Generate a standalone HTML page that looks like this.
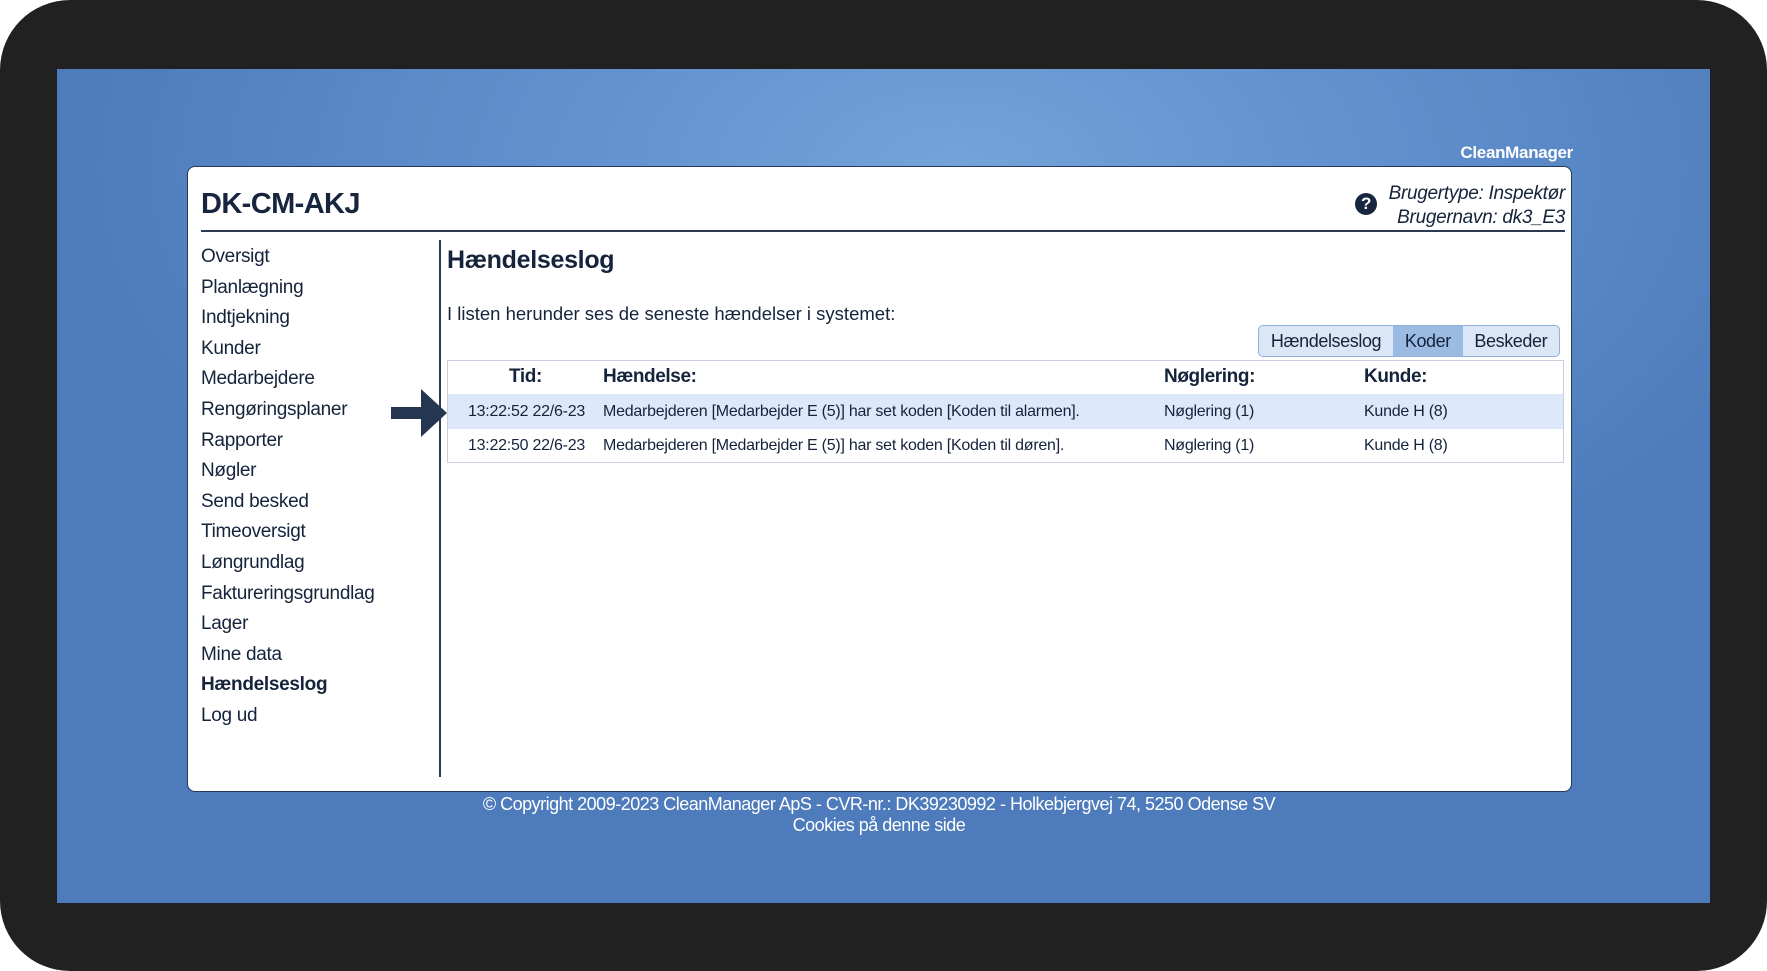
<!DOCTYPE html>
<html><head><meta charset="utf-8"><style>
*{margin:0;padding:0;box-sizing:border-box}
body{width:1767px;height:971px;background:#fff;position:relative;overflow:hidden;font-family:"Liberation Sans",Arial,sans-serif;color:#15233b;letter-spacing:-0.3px}
#frame{position:absolute;left:0;top:0;width:1767px;height:971px;background:#222122;border-radius:70px}
#blue{position:absolute;left:57px;top:69px;width:1653px;height:834px;background:radial-gradient(ellipse 900px 500px at 900px 100px,#74a3d9 0%,#6393cf 40%,#4d7bbb 100%)}
.abs{position:absolute}
#card{left:187px;top:166px;width:1385px;height:626px;background:#fff;border-radius:8px;border:1px solid #253a5a}
#cm{right:194px;top:143px;color:#fff;font-weight:bold;font-size:17px}
#title{left:201px;top:188px;font-size:29px;font-weight:bold;color:#17253e;letter-spacing:-0.6px}
#hline{left:201px;top:230px;width:1364px;height:1.5px;background:#2d3b52}
#user{right:202px;top:182px;font-style:italic;font-size:19px;text-align:right;line-height:24px}
#help{left:1355px;top:193px;width:22px;height:22px;border-radius:50%;background:#17253e;color:#fff;font-weight:bold;font-size:17px;text-align:center;line-height:22px}
#vline{left:439px;top:240px;width:1.5px;height:537px;background:#2d3b52}
#nav{left:201px;top:242px;font-size:19px;line-height:30.6px}
#h{left:447px;top:246px;font-size:25px;font-weight:bold}
#p{left:447px;top:303px;font-size:18.5px;letter-spacing:0}
#tabs{left:1258px;top:325px;width:302px;height:32px;border:1px solid #8fb0d8;border-radius:5px;background:#dbe7f6;display:flex;font-size:18px;overflow:hidden;letter-spacing:-0.4px}
#tabs div{line-height:30px;text-align:center}
#tabs .a{background:#9bbbe3}
#tbl{left:447px;top:360px;width:1117px;height:103px;border:1px solid #ccd;background:#fff}
.row{position:absolute;left:0;width:100%;font-size:16px;letter-spacing:-0.25px}
.row span{position:absolute}
</style></head><body>
<div id="frame"></div>
<div id="blue"></div>
<div id="cm" class="abs">CleanManager</div>
<div id="card" class="abs"></div>
<div id="title" class="abs">DK-CM-AKJ</div>
<div id="help" class="abs">?</div>
<div id="user" class="abs">Brugertype: Inspektør<br>Brugernavn: dk3_E3</div>
<div id="hline" class="abs"></div>
<div id="vline" class="abs"></div>
<div id="nav" class="abs">Oversigt<br>Planlægning<br>Indtjekning<br>Kunder<br>Medarbejdere<br>Rengøringsplaner<br>Rapporter<br>Nøgler<br>Send besked<br>Timeoversigt<br>Løngrundlag<br>Faktureringsgrundlag<br>Lager<br>Mine data<br><b>Hændelseslog</b><br>Log ud</div>
<div id="h" class="abs">Hændelseslog</div>
<div id="p" class="abs">I listen herunder ses de seneste hændelser i systemet:</div>
<div id="tabs" class="abs"><div style="width:135px">Hændelseslog</div><div class="a" style="width:70px">Koder</div><div style="width:97px">Beskeder</div></div>
<div id="tbl" class="abs">
<div class="row" style="top:5px;height:26px;font-size:19px;font-weight:bold;letter-spacing:-0.4px"><span style="left:61px">Tid:</span><span style="left:155px">Hændelse:</span><span style="left:716px">Nøglering:</span><span style="left:916px">Kunde:</span></div>
<div class="row" style="top:33px;height:35px;background:#dde9fb;line-height:35px"><span style="left:20px">13:22:52 22/6-23</span><span style="left:155px">Medarbejderen [Medarbejder E (5)] har set koden [Koden til alarmen].</span><span style="left:716px">Nøglering (1)</span><span style="left:916px">Kunde H (8)</span></div>
<div class="row" style="top:68px;height:34px;line-height:34px"><span style="left:20px">13:22:50 22/6-23</span><span style="left:155px">Medarbejderen [Medarbejder E (5)] har set koden [Koden til døren].</span><span style="left:716px">Nøglering (1)</span><span style="left:916px">Kunde H (8)</span></div>
</div>
<svg class="abs" style="left:391px;top:389px" width="56" height="48"><path d="M0 18H30V0L56 24L30 48V30H0Z" fill="#253650"/></svg>
<div class="abs" style="left:0;width:1758px;top:794px;text-align:center;color:#fff;font-size:18px;line-height:21px;letter-spacing:-0.5px">© Copyright 2009-2023 CleanManager ApS - CVR-nr.: DK39230992 - Holkebjergvej 74, 5250 Odense SV<br>Cookies på denne side</div>
</body></html>
